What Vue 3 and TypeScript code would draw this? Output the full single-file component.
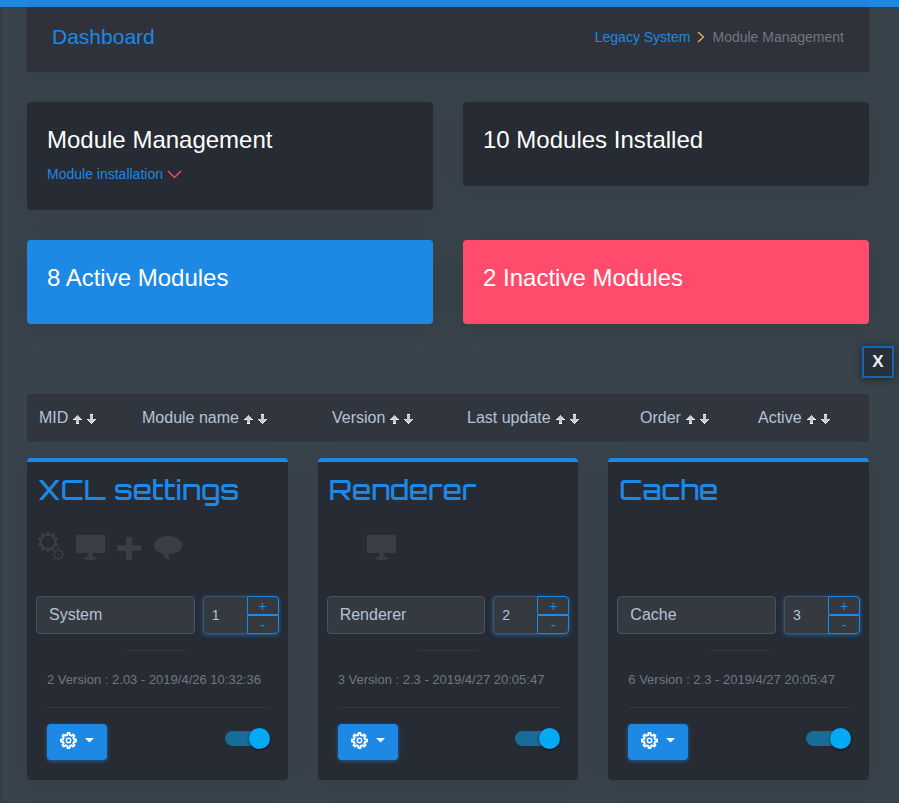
<script setup lang="ts">
import { reactive } from 'vue'

type IconName = 'gears' | 'screen' | 'plus' | 'comment'

interface ModuleCard {
  mid: number
  title: string
  name: string
  order: number
  details: string
  icons: (IconName | null)[]
  active: boolean
}

const columns = ['MID', 'Module name', 'Version', 'Last update', 'Order', 'Active']

const modules = reactive<ModuleCard[]>([
  {
    mid: 1,
    title: 'XCL settings',
    name: 'System',
    order: 1,
    details: '2 Version : 2.03 - 2019/4/26 10:32:36',
    icons: ['gears', 'screen', 'plus', 'comment'],
    active: true,
  },
  {
    mid: 2,
    title: 'Renderer',
    name: 'Renderer',
    order: 2,
    details: '3 Version : 2.3 - 2019/4/27 20:05:47',
    icons: [null, 'screen'],
    active: true,
  },
  {
    mid: 3,
    title: 'Cache',
    name: 'Cache',
    order: 3,
    details: '6 Version : 2.3 - 2019/4/27 20:05:47',
    icons: [],
    active: true,
  },
])

// Outline of a cog wheel centred on (cx, cy)
function cog(cx: number, cy: number, teeth: number, outer: number, root: number): string {
  const step = (Math.PI * 2) / teeth
  const points: string[] = []
  for (let i = 0; i < teeth; i++) {
    const a = i * step - Math.PI / 2
    const corners: [number, number][] = [
      [root, a - step * 0.3],
      [outer, a - step * 0.17],
      [outer, a + step * 0.17],
      [root, a + step * 0.3],
    ]
    for (const [r, t] of corners) {
      points.push(`${(cx + r * Math.cos(t)).toFixed(2)} ${(cy + r * Math.sin(t)).toFixed(2)}`)
    }
  }
  return `M${points.join('L')}Z`
}

function hole(cx: number, cy: number, r: number): string {
  return `M${cx - r} ${cy}a${r} ${r} 0 1 0 ${2 * r} 0a${r} ${r} 0 1 0 ${-2 * r} 0Z`
}

const iconPaths: Record<IconName, string> = {
  gears: cog(11, 10, 10, 10.6, 8.4) + hole(11, 10, 6.2) + cog(21.5, 22.5, 8, 6, 4.6) + hole(21.5, 22.5, 3.5),
  screen: 'M0 3H29V21H16.500V24.500C19.500 24.700 21 25.500 21 26.500C21 28.500 8 28.500 8 26.500C8 25.500 9.500 24.700 12.500 24.500V21H0Z',
  plus: 'M11 5H17V13.500H26V19H17V28H11V19H2V13.500H11Z',
  comment: 'M14 4C22 4 28.500 8 28.500 13S22 22 14.500 22C14 24.500 14.800 26.500 16 28.300C12.800 27.500 10 25.500 8.800 21.500C3.500 20.500 0 17 0 13C0 8 6 4 14 4Z',
}

const buttonCog = cog(8.5, 8.5, 8, 7.6, 5.6)
</script>

<template>
  <div class="page">
    <div class="topline"></div>
    <main class="content">
      <header class="masthead">
        <h1>Dashboard</h1>
        <nav class="crumbs" aria-label="Breadcrumb">
          <a href="#">Legacy System</a>
          <svg width="8" height="12" viewBox="0 0 8 12" aria-hidden="true">
            <path d="M1 1L6.500 6L1 11" fill="none" stroke="#f2b866" stroke-width="1.200" />
          </svg>
          <span>Module Management</span>
        </nav>
      </header>

      <section class="stats">
        <div class="stat">
          <h2>Module Management</h2>
          <a class="install" href="#">
            Module installation
            <svg width="15" height="9" viewBox="0 0 15 9" aria-hidden="true">
              <path d="M1 1L7.500 7.500L14 1" fill="none" stroke="#f9446a" stroke-width="1.500" />
            </svg>
          </a>
        </div>
        <div class="stat"><h2>10 Modules Installed</h2></div>
        <div class="stat active"><h2>8 Active Modules</h2></div>
        <div class="stat inactive"><h2>2 Inactive Modules</h2></div>
      </section>

      <div class="sorter">
        <div v-for="column in columns" :key="column" class="sort">
          <span>{{ column }}</span>
          <a href="#" :aria-label="`${column} ascending`">
            <svg width="9" height="10" viewBox="0 0 9 10" shape-rendering="crispEdges">
              <path d="M4 1H5V2H6V3H7V4H8V5H9V6H6V10H3V6H0V5H1V4H2V3H3V2H4Z" fill="#c9cacd" />
              <path d="M0 5H3V6H0ZM6 5H9V6H6ZM3 9H6V10H3Z" fill="#fff" />
            </svg>
          </a>
          <a href="#" :aria-label="`${column} descending`">
            <svg width="9" height="10" viewBox="0 0 9 10" shape-rendering="crispEdges">
              <path d="M3 0H6V5H9V6H8V7H7V8H6V9H5V10H4V9H3V8H2V7H1V6H0V5H3Z" fill="#c9cacd" />
              <path d="M3 0H6V1H3ZM0 5H1V6H2V7H3V8H4V9H5V8H6V7H7V6H8V5H9V6H8V7H7V8H6V9H5V10H4V9H3V8H2V7H1V6H0Z" fill="#fff" />
            </svg>
          </a>
        </div>
      </div>

      <section class="modules">
        <article v-for="item in modules" :key="item.mid" class="module">
          <h3>{{ item.title }}</h3>
          <div class="icons">
            <span v-for="(icon, i) in item.icons" :key="i" class="slot">
              <svg v-if="icon" width="29" height="29" viewBox="0 0 29 29" aria-hidden="true">
                <path :d="iconPaths[icon]" fill-rule="evenodd" />
              </svg>
            </span>
          </div>
          <div class="fields">
            <input v-model="item.name" class="name" type="text" aria-label="Module name" />
            <div class="stepper">
              <input v-model="item.order" class="order" type="text" aria-label="Order" />
              <div class="steps">
                <button type="button" @click="item.order++">+</button>
                <button type="button" @click="item.order--">-</button>
              </div>
            </div>
          </div>
          <hr class="short" />
          <div class="foot">
            <p>{{ item.details }}</p>
            <hr />
            <div class="actions">
              <button class="menu" type="button" aria-label="Module actions">
                <svg width="17" height="17" viewBox="0 0 17 17" aria-hidden="true">
                  <path :d="buttonCog" fill="none" stroke="#fff" stroke-width="1.900" stroke-linejoin="round" />
                  <circle cx="8.500" cy="8.500" r="2.200" fill="none" stroke="#fff" stroke-width="1.500" />
                </svg>
                <svg width="9" height="5" viewBox="0 0 9 5" aria-hidden="true">
                  <path d="M0 0H9L4.500 4.500Z" fill="#fff" />
                </svg>
              </button>
              <input v-model="item.active" class="switch" type="checkbox" aria-label="Active" />
            </div>
          </div>
        </article>
      </section>
    </main>
    <button class="close" type="button">X</button>
  </div>
</template>

<style>
body {
  margin: 0;
  background: #39434b;
}
</style>

<style scoped>
.page {
  box-sizing: border-box;
  position: relative;
  min-height: 100vh;
  background: #39434b;
  box-shadow: inset 1px 0 2px #2f383f;
  color: #b4c3d8;
  font-family: "Liberation Sans", Arial, sans-serif;
  font-size: 14px;
}
h1, h2, h3, p {
  margin: 0;
  font-weight: 400;
}
a {
  color: #1e88e5;
  text-decoration: none;
}
button, input {
  box-sizing: border-box;
  margin: 0;
  font-family: inherit;
}
button {
  cursor: pointer;
}
hr {
  margin: 0;
  border: 0;
  height: 1px;
  background: #343941;
}
.topline {
  height: 7px;
  background: #1e88e5;
}
.content {
  padding: 0 30px 23px 27px;
}
.masthead {
  display: flex;
  justify-content: space-between;
  height: 65px;
  padding: 0 25px;
  background: #2f323b;
  box-shadow: 0 2px 10px rgba(39, 43, 51, 0.15);
  line-height: 60px;
}
h1 {
  color: #1e88e5;
  font-size: 21px;
}
.crumbs {
  display: flex;
  align-items: center;
  gap: 7px;
  height: 60px;
  color: #707782;
}
.stats {
  display: grid;
  grid-template-columns: 1fr 1fr;
  align-items: start;
  gap: 30px;
  margin-top: 30px;
}
.stat {
  min-height: 44px;
  padding: 20px;
  border-radius: 4px;
  background: #272b33;
  box-shadow: 0 4px 20px rgba(39, 43, 51, 0.15);
  color: #fff;
}
.stat.active {
  background: #1e88e5;
}
.stat.inactive {
  background: #ff4b6c;
}
h2 {
  font-size: 24px;
  line-height: 36px;
}
.install {
  display: flex;
  align-items: center;
  gap: 4px;
  height: 32px;
}
.sorter {
  display: grid;
  grid-template-columns: 103fr 190fr 135fr 173fr 118fr 111fr;
  margin: 70px 0 16px;
  padding-left: 12px;
  background: #31363e;
  font-size: 16px;
  line-height: 48px;
}
.sort {
  display: flex;
  align-items: center;
  gap: 5px;
}
.sort a {
  display: flex;
  padding-top: 2px;
}
.modules {
  display: grid;
  grid-template-columns: repeat(3, minmax(0, 1fr));
  gap: 30px;
}
.module {
  border-top: 4px solid #1e88e5;
  border-radius: 4px;
  padding-top: 8px;
  background: #272b33;
  box-shadow: 0 4px 20px rgba(39, 43, 51, 0.15);
}
h3 {
  padding: 0 11px;
  color: #1e88e5;
  font-family: Orbitron, "DejaVu Sans", sans-serif;
  font-size: 28px;
  font-weight: 500;
  line-height: 40px;
}
.icons {
  display: flex;
  gap: 10px;
  height: 29px;
  margin-top: 22px;
  padding: 0 10px;
}
.slot {
  width: 29px;
}
.slot svg {
  display: block;
  fill: #3a3f47;
}
.fields {
  display: flex;
  gap: 8px;
  margin-top: 35px;
  padding: 0 9px;
}
.name, .order {
  min-width: 0;
  height: 38px;
  border: 1px solid #3f5470;
  border-radius: 4px;
  background: #353a41;
  color: #b4c3d8;
}
.name {
  flex: 1;
  padding: 0 12px;
  font-size: 16px;
}
.stepper {
  display: flex;
  width: 76px;
  border-radius: 4px;
  box-shadow: 0 1px 4px rgba(30, 136, 229, 0.6);
}
.order {
  flex: 1;
  border-right: 0;
  border-radius: 4px 0 0 4px;
  padding: 0 8px;
  font-size: 14px;
}
.steps {
  display: grid;
  grid-template-rows: 1fr 1fr;
  width: 32px;
}
.steps button {
  padding: 0;
  border: 1px solid #1e88e5;
  background: #353a41;
  color: #1e88e5;
  font-size: 14px;
  line-height: 16px;
}
.steps button:first-child {
  border-top-right-radius: 4px;
}
.steps button:last-child {
  border-bottom-right-radius: 4px;
}
.short {
  width: 60px;
  margin: 16px auto 18px;
}
.foot {
  padding: 0 18px 20px 20px;
}
.foot p {
  margin-bottom: 16px;
  color: #707782;
  font-size: 13px;
  line-height: 22px;
  white-space: nowrap;
}
.actions {
  display: flex;
  align-items: flex-start;
  justify-content: space-between;
  margin-top: 16px;
}
.menu {
  display: flex;
  align-items: center;
  gap: 8px;
  width: 60px;
  height: 36px;
  padding: 0 13px 4px;
  border: 0;
  border-radius: 4px;
  background: #1e88e5;
  box-shadow: 0 1px 4px rgba(30, 136, 229, 0.6);
}
.menu svg {
  flex: none;
}
.switch {
  appearance: none;
  display: flex;
  align-items: center;
  width: 45px;
  height: 21px;
  margin-top: 4px;
  cursor: pointer;
}
.switch::before {
  content: "";
  width: 36px;
  height: 15px;
  border-radius: 8px;
  background: #176d98;
}
.switch::after {
  content: "";
  width: 21px;
  height: 21px;
  margin-left: -12px;
  border-radius: 50%;
  background: #03a9f4;
  box-shadow: 0 1px 3px rgba(0, 0, 0, 0.6);
}
.switch:not(:checked)::after {
  margin-left: -36px;
  background: #8a939e;
}
.close {
  position: absolute;
  top: 346px;
  right: 5px;
  width: 32px;
  height: 32px;
  padding: 0;
  border: 2px solid #1565b5;
  background: #263038;
  box-shadow: 0 1px 8px rgba(20, 24, 30, 0.7);
  color: #eee;
  font-size: 17px;
  font-weight: 700;
}
</style>
